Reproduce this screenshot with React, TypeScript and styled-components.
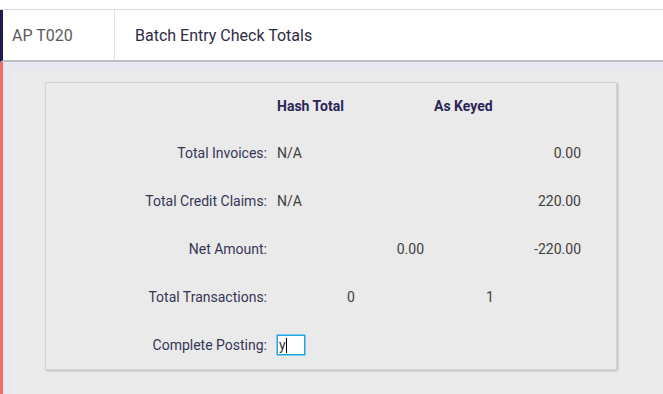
import { Fragment } from 'react';
import styled, { createGlobalStyle } from 'styled-components';

const GlobalStyle = createGlobalStyle`
  html, body {
    margin: 0;
    padding: 0;
    background: #ebebeb;
  }
  body {
    font-family: Roboto, "Liberation Sans", sans-serif;
    -webkit-font-smoothing: antialiased;
  }
`;

const Page = styled.div`
  display: flex;
  flex-direction: column;
  width: 663px;
  height: 394px;
  overflow: hidden;
`;

const TopGap = styled.div`
  height: 9px;
  background: #ffffff;
  border-bottom: 1px solid #d9d9d9;
`;

const Header = styled.div`
  display: flex;
  height: 50px;
  background: #ffffff;
  border-left: 3px solid #1f1b4d;
  border-bottom: 2px solid #bdbdc2;
`;

const CodeCell = styled.div`
  display: flex;
  align-items: center;
  width: 102px;
  padding-left: 9px;
  border-right: 1px solid #e2e2e2;
  font-size: 16px;
  color: #5a5a5a;
`;

const TitleCell = styled.div`
  display: flex;
  align-items: center;
  padding-left: 20px;
  font-size: 16px;
  color: #2e2d45;
`;

const Body = styled.div`
  flex: 1;
  display: flex;
  padding: 8px 0 0 9px;
  background: #e9e8f0;
  border-left: 3px solid #f26a6a;
`;

const Content = styled.div`
  flex: 1;
  padding: 12px 0 0 33px;
  background: #ebebeb;
`;

const Card = styled.div`
  display: grid;
  grid-template-columns: 221px 147px 147px;
  column-gap: 10px;
  grid-template-rows: 46px;
  grid-auto-rows: 48px;
  width: 570px;
  background: #eaeaea;
  border: 1px solid #d4d4d4;
  box-shadow: 1px 1px 2px rgba(0, 0, 0, 0.22);
  font-size: 14px;
`;

const ColumnHead = styled.div`
  display: flex;
  align-items: center;
  font-weight: 700;
  color: #2a2556;
`;

const Label = styled.div`
  display: flex;
  align-items: center;
  justify-content: flex-end;
  color: #363657;
`;

const Value = styled.div<{ $align?: 'left' | 'right' | 'center'; $indent?: number }>`
  display: flex;
  align-items: center;
  justify-content: ${(p) =>
    p.$align === 'right' ? 'flex-end' : p.$align === 'center' ? 'center' : 'flex-start'};
  padding-left: ${(p) => p.$indent ?? 0}px;
  color: #404040;
`;

const InputBox = styled.div`
  display: flex;
  align-items: center;
  width: 24px;
  height: 18px;
  padding: 0 1px;
  background: #ffffff;
  border: 1px solid #1ea5e6;
  box-shadow: 0 0 0 0.5px #1ea5e6;
  font-size: 14px;
  color: #333;
`;

const Caret = styled.span`
  display: inline-block;
  width: 1px;
  height: 15px;
  background: #000;
`;

type Cell = { text: string; align?: 'left' | 'right' | 'center'; indent?: number };

const rows: { label: string; hash?: Cell; keyed?: Cell }[] = [
  { label: 'Total Invoices:', hash: { text: 'N/A' }, keyed: { text: '0.00', align: 'right' } },
  { label: 'Total Credit Claims:', hash: { text: 'N/A' }, keyed: { text: '220.00', align: 'right' } },
  { label: 'Net Amount:', hash: { text: '0.00', align: 'right' }, keyed: { text: '-220.00', align: 'right' } },
  { label: 'Total Transactions:', hash: { text: '0', indent: 70 }, keyed: { text: '1', indent: 52 } },
];

export default function App() {
  return (
    <Page>
      <GlobalStyle />
      <TopGap />
      <Header>
        <CodeCell>AP T020</CodeCell>
        <TitleCell>Batch Entry Check Totals</TitleCell>
      </Header>
      <Body>
        <Content>
          <Card>
            <div />
            <ColumnHead>Hash Total</ColumnHead>
            <ColumnHead>As Keyed</ColumnHead>
            {rows.map((r) => (
              <Fragment key={r.label}>
                <Label>{r.label}</Label>
                <Value $align={r.hash?.align} $indent={r.hash?.indent}>
                  {r.hash?.text}
                </Value>
                <Value $align={r.keyed?.align} $indent={r.keyed?.indent}>
                  {r.keyed?.text}
                </Value>
              </Fragment>
            ))}
            <Label>Complete Posting:</Label>
            <Value>
              <InputBox>
                y
                <Caret />
              </InputBox>
            </Value>
            <div />
          </Card>
        </Content>
      </Body>
    </Page>
  );
}
